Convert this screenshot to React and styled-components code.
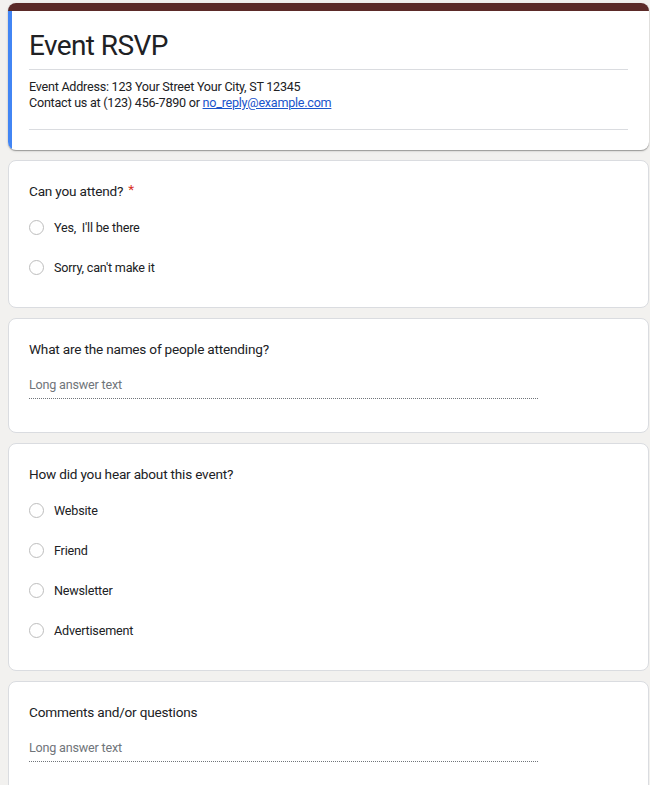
import React from "react";
import styled, { createGlobalStyle } from "styled-components";

const GlobalStyle = createGlobalStyle`
  body {
    margin: 0;
    background: #f2f1ef;
    font-family: Roboto, "Liberation Sans", Arial, sans-serif;
    color: #202124;
  }
`;

const Page = styled.div`
  display: flex;
  flex-direction: column;
  gap: 10px;
  padding: 3px 1px 20px 8px;
`;

const HeaderCard = styled.div`
  background: #fff;
  border-radius: 8px;
  overflow: hidden;
  box-shadow: 0 1px 1px rgba(0, 0, 0, 0.3), 0 1px 3px rgba(0, 0, 0, 0.12);
`;

const TopBar = styled.div`
  height: 8px;
  background: #5b2a28;
`;

const HeaderBody = styled.div`
  border-left: 4px solid #4285f4;
  padding: 18px 21px 20px 17px;
`;

const Title = styled.h1`
  margin: 0;
  font-size: 28px;
  font-weight: 400;
  line-height: 34px;
  letter-spacing: -0.6px;
`;

const Divider = styled.hr`
  margin: ${(p) => p.$gap || "6px 0 0"};
  border: 0;
  border-top: 1px solid #dadce0;
`;

const Description = styled.div`
  margin-top: 9px;
  font-size: 12.6px;
  line-height: 16px;
  letter-spacing: -0.25px;

  a {
    color: #1a55cc;
  }
`;

const Card = styled.div`
  background: #fff;
  border: 1px solid #dadce0;
  border-radius: 8px;
  padding: 20px;
`;

const Question = styled.div`
  font-size: 13.6px;
  line-height: 20px;
  letter-spacing: -0.2px;
`;

const Required = styled.span`
  color: #d93025;
  margin-left: 5px;
  position: relative;
  top: -2px;
`;

const Options = styled.div`
  margin-top: 6px;
  display: flex;
  flex-direction: column;
`;

const Option = styled.label`
  display: flex;
  align-items: center;
  gap: 10px;
  height: 40px;
  font-size: 12.6px;
  letter-spacing: -0.2px;
`;

const Radio = styled.span`
  width: 15px;
  height: 15px;
  box-sizing: border-box;
  border: 1.5px solid #bdbdbd;
  border-radius: 50%;
  flex: none;
`;

const AnswerField = styled.div`
  width: 509px;
  margin: 16px 0 13px;
  padding-bottom: 3px;
  border-bottom: 1px dotted #70757a;
  font-size: 12.6px;
  line-height: 20px;
  letter-spacing: -0.2px;
  color: #70757a;
`;

const RadioQuestion = ({ title, required, options }) => (
  <Card>
    <Question>
      {title}
      {required && <Required>*</Required>}
    </Question>
    <Options>
      {options.map((o) => (
        <Option key={o}>
          <Radio />
          {o}
        </Option>
      ))}
    </Options>
  </Card>
);

const TextQuestion = ({ title }) => (
  <Card>
    <Question>{title}</Question>
    <AnswerField>Long answer text</AnswerField>
  </Card>
);

const App = () => {
  return (
    <>
      <GlobalStyle />
      <Page>
        <HeaderCard>
          <TopBar />
          <HeaderBody>
            <Title>Event RSVP</Title>
            <Divider />
            <Description>
              Event Address: 123 Your Street Your City, ST 12345
              <br />
              Contact us at (123) 456-7890 or{" "}
              <a href="#">no_reply@example.com</a>
            </Description>
            <Divider $gap="18px 0 0" />
          </HeaderBody>
        </HeaderCard>
        <RadioQuestion
          title="Can you attend?"
          required
          options={["Yes,\u00a0 I'll be there", "Sorry, can't make it"]}
        />
        <TextQuestion title="What are the names of people attending?" />
        <RadioQuestion
          title="How did you hear about this event?"
          options={["Website", "Friend", "Newsletter", "Advertisement"]}
        />
        <TextQuestion title="Comments and/or questions" />
      </Page>
    </>
  );
};

export default App;
